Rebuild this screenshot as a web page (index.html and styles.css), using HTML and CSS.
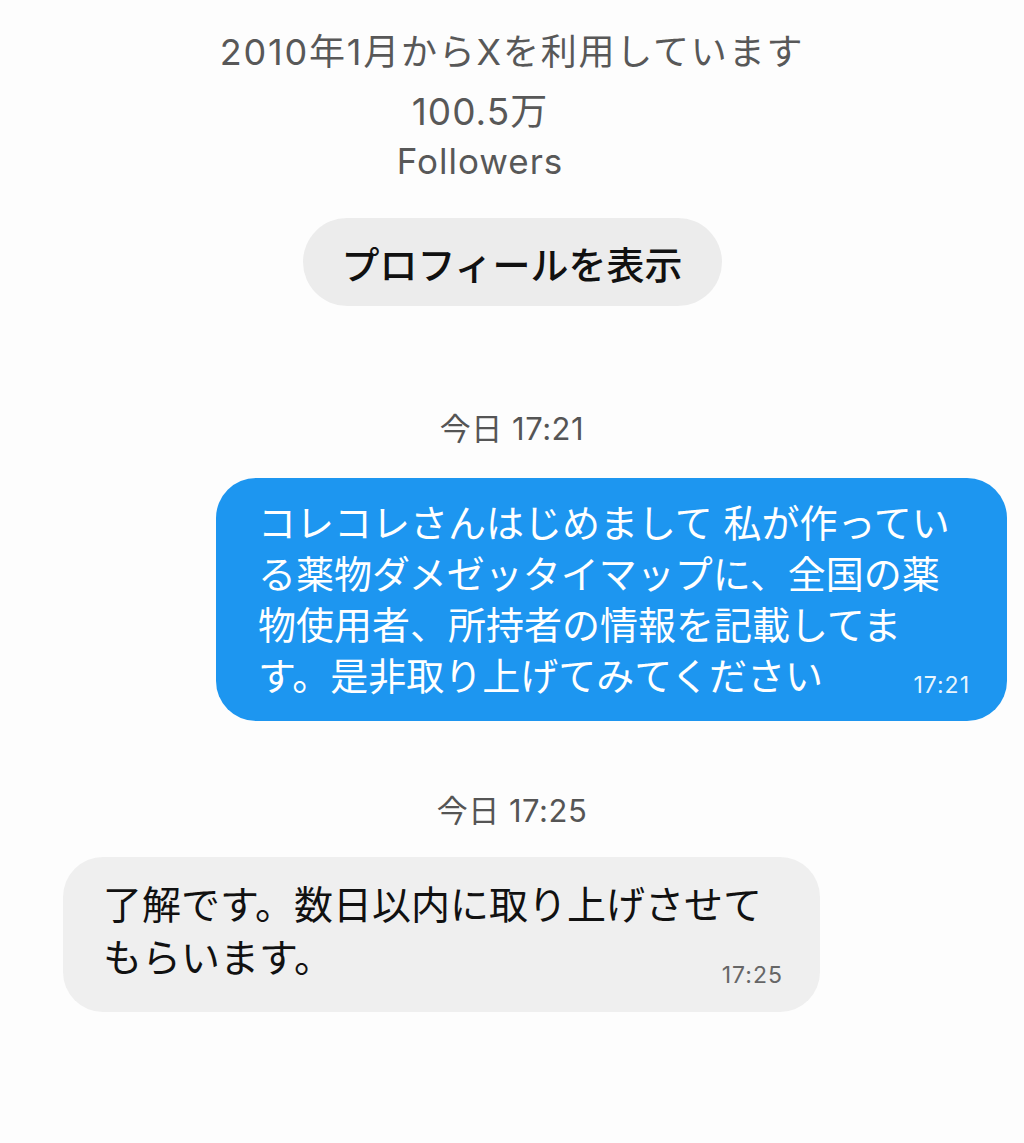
FILE: index.html
```html
<!DOCTYPE html>
<html lang="ja">
<head>
  <meta charset="UTF-8" />
  <meta name="viewport" content="width=device-width, initial-scale=1.0" />
  <title>メッセージ</title>
  <link rel="stylesheet" href="styles.css">
</head>
<body>
  <div class="chat">
    <header class="profile">
      <p class="joined">2010年1月からXを利用しています</p>
      <div class="stats">
        <p class="count">100.5万</p>
        <p class="count-label">Followers</p>
      </div>
      <button class="profile-btn" type="button">プロフィールを表示</button>
    </header>

    <div class="day">今日 17:21</div>
    <div class="row sent">
      <div class="bubble">
        <p class="text">コレコレさんはじめまして 私が作っている薬物ダメゼッタイマップに、全国の薬物使用者、所持者の情報を記載してます。是非取り上げてみてください</p>
        <span class="time">17:21</span>
      </div>
    </div>

    <div class="day">今日 17:25</div>
    <div class="row received">
      <div class="bubble">
        <p class="text">了解です。数日以内に取り上げさせてもらいます。</p>
        <span class="time">17:25</span>
      </div>
    </div>
  </div>
</body>
</html>
```

FILE: styles.css
```css
body {
  margin: 0;
  background: #fdfdfd;
  font-family: "Inter", "Noto Sans CJK JP", sans-serif;
}
p {
  margin: 0;
}
.chat {
  display: flex;
  flex-direction: column;
}
.profile {
  display: flex;
  flex-direction: column;
  align-items: center;
  padding-top: 30px;
  color: #585858;
}
.joined {
  font-size: 36px;
  line-height: 44px;
  letter-spacing: 1.8px;
}
.stats {
  display: flex;
  flex-direction: column;
  align-items: center;
  margin-right: 64px; /* the stat sits a bit left of centre */
}
.count {
  margin-top: 16px;
  font-size: 37px;
  line-height: 44px;
  letter-spacing: 1px;
}
.count-label {
  margin-top: 5px;
  font-size: 35px;
  line-height: 44px;
  letter-spacing: 1px;
}
.profile-btn {
  margin-top: 35px;
  width: 419px;
  height: 88px;
  border: none;
  border-radius: 44px;
  background: #ececec;
  color: #111;
  font-family: inherit;
  font-size: 38px;
  font-weight: 500;
}
.day {
  margin-top: 103px;
  text-align: center;
  color: #555;
  font-size: 31px;
  line-height: 40px;
  letter-spacing: 0.5px;
}
.day + .row {
  margin-top: 29px;
}
.day + .received {
  margin-top: 26px;
}
.row + .day {
  margin-top: 70px;
}
.row {
  display: flex;
}
.sent {
  justify-content: flex-end;
  padding-right: 17px;
}
.received {
  padding-left: 63px;
}
.bubble {
  display: grid;
  box-sizing: border-box;
  border-radius: 40px;
}
.text,
.time {
  grid-area: 1 / 1;
}
.text {
  font-size: 38px;
  line-height: 51px;
}
.time {
  justify-self: end;
  align-self: end;
  font-size: 23px;
  line-height: 26px;
  letter-spacing: 1px;
}
.sent .bubble {
  width: 791px;
  padding: 20px 37px 19px 42px;
  background: #1d96f0;
  color: #fff;
}
.sent .time {
  margin-bottom: 4px;
  color: rgba(255, 255, 255, 0.92);
}
.received .bubble {
  width: 757px;
  padding: 21px 45px 28px 40px;
  background: #efefef;
  color: #111;
}
.received .text {
  font-size: 39px;
  line-height: 53px;
}
.received .time {
  margin-right: -8px;
  margin-bottom: -4px;
  color: #666;
}
```
